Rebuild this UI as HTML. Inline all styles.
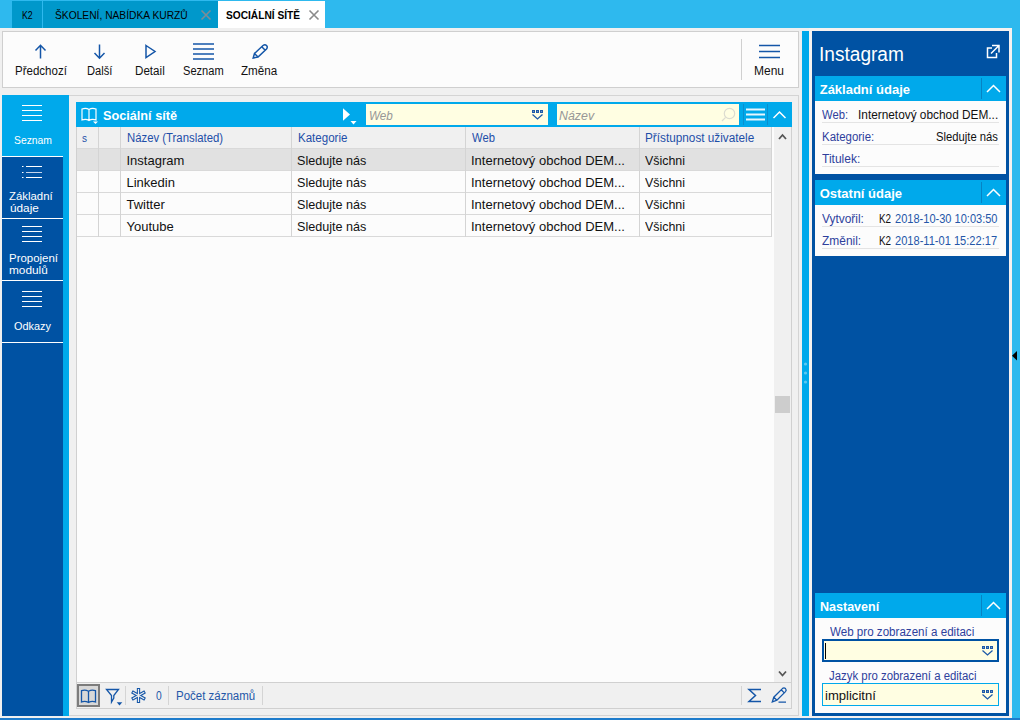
<!DOCTYPE html>
<html><head><meta charset="utf-8">
<style>
*{box-sizing:border-box;margin:0;padding:0}
html,body{width:1020px;height:720px;overflow:hidden}
body{position:relative;background:#f0f0f0;font-family:"Liberation Sans",sans-serif;font-size:12px;color:#000;line-height:1}
.a{position:absolute;white-space:nowrap}
.t{position:absolute;white-space:nowrap;line-height:1;transform-origin:0 0}
svg{position:absolute;overflow:visible;left:0;top:0}
.lb{background:#00a9eb}
.db{background:#0052a3}
.tb{font-size:11.5px;color:#111}
.nv{font-size:11px;color:#fff;line-height:13px}
.ch{font-size:11.5px;color:#2856b0}
.cell{font-size:12.5px;color:#111}
.rl{position:absolute;height:1px;background:#d9d9d9}
.cl{position:absolute;width:1px;background:#d4d4d4}
.sh{position:absolute;left:815px;width:191px;height:25px;background:#00a9eb}
.st{font-size:13px;font-weight:bold;color:#fff}
.sb{position:absolute;left:815px;width:191px;background:#fcfcfc}
.fl{font-size:12px;color:#2e3f9c}
.fu{position:absolute;left:822px;width:177px;height:1px;background:#e4e4e4}
</style></head><body>
<!-- top bar -->
<div class="a" style="left:0;top:0;width:1020px;height:28px;background:#2eb9ee"></div>
<div class="a" style="left:1012px;top:0;width:8px;height:719px;background:#2eb9ee"></div>
<div class="a" style="left:0;top:718px;width:1020px;height:2px;background:#1e7ccc"></div>
<!-- tabs -->
<div class="a" style="left:12px;top:1px;width:30px;height:27px;background:#0098cb"></div>
<div class="a" style="left:43px;top:1px;width:175px;height:27px;background:#0098cb"></div>
<svg width="1020" height="40"><path d="M201.5 10.5 L210.5 19.5 M210.5 10.5 L201.5 19.5" stroke="#7f8c94" stroke-width="1.6"/></svg>
<div class="a" style="left:218px;top:1px;width:107px;height:27px;background:#fff"></div>
<svg width="1020" height="40"><path d="M309.5 10.5 L318.5 19.5 M318.5 10.5 L309.5 19.5" stroke="#8a8a8a" stroke-width="1.6"/></svg>

<!-- toolbar -->
<div class="a" style="left:2px;top:31px;width:797px;height:57px;background:#fcfcfc;border:1px solid #cfcfcf"></div>
<div class="a" style="left:741px;top:39px;width:1px;height:41px;background:#d0d0d0"></div>
<svg width="1020" height="100" fill="none" stroke="#1456a8" stroke-width="1.5">
  <path d="M40.5 45 V58.5 M35.5 50.5 L40.5 45.3 L45.5 50.5"/>
  <path d="M99.5 44.5 V58.5 M94.5 53 L99.5 58.2 L104.5 53"/>
  <path d="M146 45.5 L155 51.5 L146 57.5 Z"/>
  <path d="M193 44 H214 M193 49 H214 M193 54 H214 M193 59 H214"/>
  <path d="M253.2 58 L254.5 53.5 L263 45.5 Q265 44 266.5 45.5 Q268 47 266.5 49 L258 57 Z M262 47 L265 50 M254.5 53.5 L258 57"/>
  <path d="M759 45.5 H780 M759 51.5 H780 M759 57.5 H780"/>
</svg>

<!-- left nav -->
<div class="a lb" style="left:2px;top:95px;width:67px;height:621px"></div>
<div class="a db" style="left:2px;top:157px;width:61px;height:559px"></div>
<div class="a" style="left:2px;top:156px;width:61px;height:1px;background:#fff"></div>
<div class="a" style="left:2px;top:218px;width:61px;height:1px;background:#fff"></div>
<div class="a" style="left:2px;top:280px;width:61px;height:1px;background:#fff"></div>
<div class="a" style="left:2px;top:342px;width:61px;height:1px;background:#fff"></div>
<svg width="100" height="400" fill="none" stroke="#fff" stroke-width="1">
  <path d="M22 105.5 H42 M22 110.5 H42 M22 115.5 H42 M22 120.5 H42"/>
  <path d="M26 166.5 H42 M26 177.5 H42 M22 166.5 H23.5 M22 172.5 H23.5 M22 177.5 H23.5"/>
  <path d="M26 172.5 H42" stroke="#c4d4ec"/>
  <path d="M22 226.5 H42 M22 231.5 H42 M22 236.5 H42 M22 241.5 H42"/>
  <path d="M22 291.5 H42 M22 296.5 H42 M22 301.5 H42 M22 306.5 H42"/>
</svg>

<!-- main outer panel -->
<div class="a" style="left:69px;top:95px;width:730px;height:621px;border:1px solid #d4d4d4;border-left:none"></div>
<!-- list header -->
<div class="a lb" style="left:76px;top:102px;width:716px;height:25px"></div>
<svg width="1020" height="200" fill="none" stroke="#fff" stroke-width="1.2">
  <path d="M82 109 Q86 107.5 89 109.5 Q92 107.5 96 109 V120 Q92 118.5 89 120.5 Q86 118.5 82 120 Z M89 109.5 V120.5"/>
  <path d="M93 121.5 L98 121.5 L95.5 124 Z" fill="#fff" stroke="none"/>
  <path d="M343 108.3 L350 114.5 L343 120.8 Z" fill="#fff" stroke="none"/>
  <path d="M350.5 121 L356.5 121 L353.5 124.5 Z" fill="#fff" stroke="none"/>
</svg>
<div class="a" style="left:366px;top:104px;width:182px;height:21px;background:#fffee2"></div>
<svg width="1020" height="200" fill="#1e5aa8" stroke="none">
  <rect x="532" y="110" width="3" height="3"/><rect x="536" y="110" width="3" height="3"/><rect x="540" y="110" width="3" height="3"/>
  <path d="M532.5 114.5 L537.5 119 L542.5 114.5" fill="none" stroke="#1e5aa8" stroke-width="1.3"/>
</svg>
<div class="a" style="left:557px;top:104px;width:182px;height:21px;background:#fffee2"></div>
<svg width="1020" height="200" fill="none">
  <circle cx="729.5" cy="113.5" r="5.2" stroke="#dcdcd0" stroke-width="1.2"/>
  <path d="M725.6 117.4 L722 121" stroke="#dcdcd0" stroke-width="1.2"/>
  <path d="M743.5 104 V125 M767.5 104 V125" stroke="#0a8fcf" stroke-width="1"/>
  <path d="M746 109.5 H765 M746 114.5 H765 M746 119.5 H765" stroke="#e8f6fd" stroke-width="1.8"/>
  <path d="M773.5 118 L779.5 112 L785.5 118" stroke="#fff" stroke-width="1.5"/>
</svg>

<!-- grid -->
<div class="a" style="left:76px;top:127px;width:716px;height:582px;background:#fcfcfc;border:1px solid #d0d0d0;border-top:none"></div>
<div class="a" style="left:77px;top:127px;width:694px;height:21px;background:#f0f0f0"></div>
<div class="a" style="left:77px;top:148px;width:694px;height:22px;background:#e1e1e1"></div>
<div class="rl" style="left:77px;top:148px;width:694px"></div>
<div class="rl" style="left:77px;top:170px;width:694px"></div>
<div class="rl" style="left:77px;top:192px;width:694px"></div>
<div class="rl" style="left:77px;top:214px;width:694px"></div>
<div class="rl" style="left:77px;top:236px;width:694px"></div>
<div class="cl" style="left:98px;top:127px;height:110px"></div>
<div class="cl" style="left:120px;top:127px;height:110px"></div>
<div class="cl" style="left:291px;top:127px;height:110px"></div>
<div class="cl" style="left:465px;top:127px;height:110px"></div>
<div class="cl" style="left:639px;top:127px;height:110px"></div>
<div class="cl" style="left:771px;top:127px;height:110px"></div>


<!-- scrollbar -->
<div class="a" style="left:774px;top:127px;width:17px;height:555px;background:#f0f0f0"></div>
<div class="a" style="left:775px;top:396px;width:15px;height:17px;background:#cdcdcd"></div>
<svg width="1020" height="720" fill="none" stroke="#555" stroke-width="1.8">
  <path d="M779 139 L782.5 135 L786 139"/>
  <path d="M779 671.5 L782.5 675.5 L786 671.5"/>
</svg>

<!-- status bar -->
<div class="a" style="left:77px;top:682px;width:714px;height:26px;background:#f0f0f0;border-top:1px solid #d0d0d0"></div>
<div class="a" style="left:77px;top:684px;width:23px;height:23px;background:#d8d8d8;border:2px solid #7c7c7c"></div>
<div class="cl" style="left:125px;top:686px;height:19px"></div>
<div class="cl" style="left:168px;top:686px;height:19px"></div>
<div class="cl" style="left:262px;top:686px;height:19px"></div>
<div class="cl" style="left:741px;top:686px;height:19px"></div>
<svg width="1020" height="720" fill="none" stroke="#1456a8" stroke-width="1.3">
  <path d="M81.5 690.7 Q85 689.2 88.5 691.2 Q92 689.2 95.5 690.7 V702 Q92 700.5 88.5 702.5 Q85 700.5 81.5 702 Z M88.5 691.2 V702.5"/>
  <path d="M106.5 689.5 H118.5 L113.8 695.5 V698 L111.5 702 V695.5 Z"/>
  <path d="M116.7 702.2 H122.3 L119.5 705.6 Z" fill="#1456a8" stroke="none"/>
  <path d="M138.5 688 V703 M131.9 691.7 L145.1 699.3 M131.9 699.3 L145.1 691.7" stroke-width="3.3"/><path d="M138.5 689 V702 M132.8 692.2 L144.2 698.8 M132.8 698.8 L144.2 692.2" stroke="#f0f0f0" stroke-width="1.2"/>
  <path d="M761 689.5 H749 L755.5 695.5 L749 701.5 H761" stroke-width="1.5"/>
  <path d="M772.3 702 L773.8 697.2 L782.4 688.6 Q784 687.2 785.5 688.6 Q786.9 690.1 785.5 691.6 L776.9 700.2 Z M781.2 689.8 L784.3 692.9 M773.8 697.2 L776.9 700.2 M778.5 702.2 H786" stroke-width="1.3"/>
</svg>

<!-- right splitter -->
<div class="a lb" style="left:802px;top:31px;width:7px;height:685px"></div>
<svg width="1020" height="720" fill="#5cc8f2">
  <circle cx="805.5" cy="364" r="1.6"/><circle cx="805.5" cy="373" r="1.6"/><circle cx="805.5" cy="382" r="1.6"/>
</svg>
<!-- right panel -->
<div class="a" style="left:809px;top:28px;width:203px;height:690px;background:#f6f2f0"></div>
<div class="a db" style="left:812px;top:31px;width:197px;height:685px"></div>
<svg width="1020" height="100" fill="none" stroke="#fff" stroke-width="1.5">
  <path d="M992 48 H987.5 V57.5 H996.5 V53"/>
  <path d="M992 45.5 H999 V52.5 M998.5 46 L991 53.5"/>
</svg>

<!-- section 1 -->
<div class="sh" style="top:76px"></div>
<svg width="1020" height="720" fill="none" stroke="#fff" stroke-width="1.5">
  <path d="M981.5 78 V99" stroke="#0683c4" stroke-width="1"/>
  <path d="M987 92 L993.5 85.5 L1000 92"/>
</svg>
<div class="sb" style="top:101px;height:73px"></div>
<div class="fu" style="top:122px"></div>
<div class="fu" style="top:144px"></div>
<div class="fu" style="top:166px"></div>

<!-- section 2 -->
<div class="sh" style="top:180px"></div>
<svg width="1020" height="720" fill="none" stroke="#fff" stroke-width="1.5">
  <path d="M981.5 182 V203" stroke="#0683c4" stroke-width="1"/>
  <path d="M987 196 L993.5 189.5 L1000 196"/>
</svg>
<div class="sb" style="top:205px;height:51px"></div>
<div class="fu" style="top:226px"></div>
<div class="fu" style="top:248px"></div>

<!-- section 3 -->
<div class="sh" style="top:593px"></div>
<svg width="1020" height="720" fill="none" stroke="#fff" stroke-width="1.5">
  <path d="M981.5 595 V616" stroke="#0683c4" stroke-width="1"/>
  <path d="M987 609 L993.5 602.5 L1000 609"/>
</svg>
<div class="sb" style="top:618px;height:95px"></div>
<div class="a" style="left:822px;top:639px;width:177px;height:23px;background:#fffee2;border:2px solid #0052a3"></div>
<div class="a" style="left:825px;top:643px;width:1px;height:16px;background:#000"></div>
<div class="a" style="left:822px;top:683px;width:177px;height:23px;background:#fffee2;border:1px solid #00a9eb"></div>
<svg width="1020" height="720" fill="#1e5aa8" stroke="none">
  <rect x="982" y="646" width="3" height="3"/><rect x="986" y="646" width="3" height="3"/><rect x="990" y="646" width="3" height="3"/>
  <path d="M982.5 650.5 L987.5 655 L992.5 650.5" fill="none" stroke="#1e5aa8" stroke-width="1.3"/>
  <rect x="982" y="690" width="3" height="3"/><rect x="986" y="690" width="3" height="3"/><rect x="990" y="690" width="3" height="3"/>
  <path d="M982.5 694.5 L987.5 699 L992.5 694.5" fill="none" stroke="#1e5aa8" stroke-width="1.3"/>
</svg>
<svg width="1020" height="720"><path d="M1012 355.8 L1017 351 L1017 360.6 Z" fill="#000"/></svg>
<svg width="1020" height="720" fill="#9fb6d6"><rect x="533.2" y="111.2" width="0.8" height="0.8"/><rect x="537.2" y="111.2" width="0.8" height="0.8"/><rect x="541.2" y="111.2" width="0.8" height="0.8"/><rect x="983.2" y="647.2" width="0.8" height="0.8"/><rect x="987.2" y="647.2" width="0.8" height="0.8"/><rect x="991.2" y="647.2" width="0.8" height="0.8"/><rect x="983.2" y="691.2" width="0.8" height="0.8"/><rect x="987.2" y="691.2" width="0.8" height="0.8"/><rect x="991.2" y="691.2" width="0.8" height="0.8"/></svg>
<div class="t" style="left:21.50px;top:10px;font-size:11px;color:#000;transform:scaleX(0.7955)">K2</div>
<div class="t" style="left:55.00px;top:10px;font-size:11px;color:#000;transform:scaleX(0.9319)">ŠKOLENÍ, NABÍDKA KURZŮ</div>
<div class="t" style="left:226.00px;top:10px;font-size:11px;color:#000;font-weight:bold;transform:scaleX(0.9244)">SOCIÁLNÍ SÍTĚ</div>
<div class="t" style="left:14.50px;top:65px;font-size:12.5px;color:#111;transform:scaleX(0.9218)">Předchozí</div>
<div class="t" style="left:87.00px;top:65px;font-size:12.5px;color:#111;transform:scaleX(0.8912)">Další</div>
<div class="t" style="left:135.00px;top:65px;font-size:12.5px;color:#111;transform:scaleX(0.9296)">Detail</div>
<div class="t" style="left:183.00px;top:65px;font-size:12.5px;color:#111;transform:scaleX(0.8877)">Seznam</div>
<div class="t" style="left:241.30px;top:65px;font-size:12.5px;color:#111;transform:scaleX(0.9294)">Změna</div>
<div class="t" style="left:754.00px;top:65px;font-size:12.5px;color:#111;transform:scaleX(0.9600)">Menu</div>
<div class="t" style="left:14.00px;top:135px;font-size:11.5px;color:#fff;transform:scaleX(0.9005)">Seznam</div>
<div class="t" style="left:9.20px;top:191px;font-size:11.5px;color:#fff;transform:scaleX(0.9887)">Základní</div>
<div class="t" style="left:9.50px;top:203px;font-size:11.5px;color:#fff;transform:scaleX(1.0231)">údaje</div>
<div class="t" style="left:9.00px;top:253px;font-size:11.5px;color:#fff;transform:scaleX(0.9949)">Propojení</div>
<div class="t" style="left:9.00px;top:265px;font-size:11.5px;color:#fff;transform:scaleX(1.0292)">modulů</div>
<div class="t" style="left:14.00px;top:321px;font-size:11.5px;color:#fff;transform:scaleX(0.9487)">Odkazy</div>
<div class="t" style="left:103.00px;top:110px;font-size:12.5px;color:#fff;font-weight:bold;transform:scaleX(1.0144)">Sociální sítě</div>
<div class="t" style="left:368.80px;top:110px;font-size:12px;color:#979797;font-style:italic;transform:scaleX(0.9734)">Web</div>
<div class="t" style="left:559.00px;top:110px;font-size:12px;color:#979797;font-style:italic;transform:scaleX(1.0318)">Název</div>
<div class="t" style="left:82.40px;top:133px;font-size:11.5px;color:#1d4ea8;transform:scaleX(0.8696)">s</div>
<div class="t" style="left:126.50px;top:132px;font-size:12.5px;color:#1d4ea8;transform:scaleX(0.9074)">Název (Translated)</div>
<div class="t" style="left:297.60px;top:132px;font-size:12.5px;color:#1d4ea8;transform:scaleX(0.9234)">Kategorie</div>
<div class="t" style="left:471.60px;top:132px;font-size:12.5px;color:#1d4ea8;transform:scaleX(0.8980)">Web</div>
<div class="t" style="left:645.00px;top:132px;font-size:12.5px;color:#1d4ea8;transform:scaleX(0.9418)">Přístupnost uživatele</div>
<div class="t" style="left:155.50px;top:690px;font-size:12.5px;color:#2457a8;transform:scaleX(0.8201)">0</div>
<div class="t" style="left:175.50px;top:690px;font-size:12.5px;color:#2457a8;transform:scaleX(0.9193)">Počet záznamů</div>
<div class="t" style="left:819.10px;top:44px;font-size:20px;color:#fff;transform:scaleX(0.9545)">Instagram</div>
<div class="t" style="left:819.70px;top:83px;font-size:13px;color:#fff;font-weight:bold">Základní údaje</div>
<div class="t" style="left:822.40px;top:109px;font-size:12.5px;color:#2e3f9c;transform:scaleX(0.9016)">Web:</div>
<div class="t" style="left:858.20px;top:109px;font-size:12.5px;color:#111;transform:scaleX(0.9473)">Internetový obchod DEM...</div>
<div class="t" style="left:822.40px;top:131px;font-size:12.5px;color:#2e3f9c;transform:scaleX(0.9158)">Kategorie:</div>
<div class="t" style="left:936.40px;top:131px;font-size:12.5px;color:#111;transform:scaleX(0.9012)">Sledujte nás</div>
<div class="t" style="left:822.40px;top:153px;font-size:12.5px;color:#2e3f9c;transform:scaleX(0.9598)">Titulek:</div>
<div class="t" style="left:819.70px;top:187px;font-size:13px;color:#fff;font-weight:bold">Ostatní údaje</div>
<div class="t" style="left:822.40px;top:213px;font-size:12.5px;color:#2e3f9c;transform:scaleX(0.9523)">Vytvořil:</div>
<div class="t" style="left:879.20px;top:213px;font-size:12.5px;color:#111;transform:scaleX(0.7908)">K2</div>
<div class="t" style="left:895.40px;top:213px;font-size:12.5px;color:#2456a8;transform:scaleX(0.8832)">2018-10-30 10:03:50</div>
<div class="t" style="left:822.40px;top:235px;font-size:12.5px;color:#2e3f9c;transform:scaleX(0.9561)">Změnil:</div>
<div class="t" style="left:879.20px;top:235px;font-size:12.5px;color:#111;transform:scaleX(0.7908)">K2</div>
<div class="t" style="left:895.40px;top:235px;font-size:12.5px;color:#2456a8;transform:scaleX(0.8867)">2018-11-01 15:22:17</div>
<div class="t" style="left:819.70px;top:600px;font-size:13px;color:#fff;font-weight:bold;transform:scaleX(0.9628)">Nastavení</div>
<div class="t" style="left:829.50px;top:626px;font-size:12.5px;color:#2e3f9c;transform:scaleX(0.9279)">Web pro zobrazení a editaci</div>
<div class="t" style="left:829.00px;top:670px;font-size:12.5px;color:#2e3f9c;transform:scaleX(0.9117)">Jazyk pro zobrazení a editaci</div>
<div class="t" style="left:825.20px;top:690px;font-size:12.5px;color:#111;transform:scaleX(1.0453)">implicitní</div>
<div class="t" style="left:126.50px;top:154px;font-size:13px;color:#111">Instagram</div>
<div class="t" style="left:297.30px;top:154px;font-size:13px;color:#111;transform:scaleX(0.9686)">Sledujte nás</div>
<div class="t" style="left:471.00px;top:154px;font-size:13px;color:#111">Internetový obchod DEM...</div>
<div class="t" style="left:645.00px;top:154px;font-size:13px;color:#111;transform:scaleX(0.9547)">Všichni</div>
<div class="t" style="left:126.50px;top:176px;font-size:13px;color:#111">Linkedin</div>
<div class="t" style="left:297.30px;top:176px;font-size:13px;color:#111;transform:scaleX(0.9686)">Sledujte nás</div>
<div class="t" style="left:471.00px;top:176px;font-size:13px;color:#111">Internetový obchod DEM...</div>
<div class="t" style="left:645.00px;top:176px;font-size:13px;color:#111;transform:scaleX(0.9547)">Všichni</div>
<div class="t" style="left:126.50px;top:198px;font-size:13px;color:#111">Twitter</div>
<div class="t" style="left:297.30px;top:198px;font-size:13px;color:#111;transform:scaleX(0.9686)">Sledujte nás</div>
<div class="t" style="left:471.00px;top:198px;font-size:13px;color:#111">Internetový obchod DEM...</div>
<div class="t" style="left:645.00px;top:198px;font-size:13px;color:#111;transform:scaleX(0.9547)">Všichni</div>
<div class="t" style="left:126.50px;top:220px;font-size:13px;color:#111">Youtube</div>
<div class="t" style="left:297.30px;top:220px;font-size:13px;color:#111;transform:scaleX(0.9686)">Sledujte nás</div>
<div class="t" style="left:471.00px;top:220px;font-size:13px;color:#111">Internetový obchod DEM...</div>
<div class="t" style="left:645.00px;top:220px;font-size:13px;color:#111;transform:scaleX(0.9547)">Všichni</div>
</body></html>
